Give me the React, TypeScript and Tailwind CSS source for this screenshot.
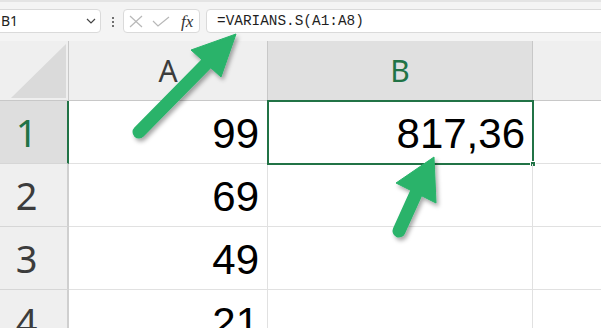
import React from "react";

const GREEN = "#217346";

const rows = [
  { n: "1", a: "99", b: "817,36", selected: true },
  { n: "2", a: "69", b: "" },
  { n: "3", a: "49", b: "" },
  { n: "4", a: "21", b: "" },
];

const Toolbar: React.FC = () => (
  <div className="h-[41px] bg-[#f4f4f4] border-t-2 border-[#e4e4e4] flex items-start pt-[7px] overflow-hidden">
    {/* name box */}
    <div className="ml-[-6px] w-[107px] h-[24px] shrink-0 rounded-[4px] border border-[#dadada] bg-white flex items-center justify-between pl-[6px] pr-[4px]">
      <span className="text-[14px] text-[#222] font-['Noto_Sans',sans-serif] leading-none">B1</span>
      <svg width="10" height="6" viewBox="0 0 10 6" fill="none" stroke="#444" strokeWidth="1.2">
        <polyline points="1,1 5,5 9,1" />
      </svg>
    </div>
    {/* more dots */}
    <div className="ml-[11px] mt-[8px] flex flex-col gap-[2px] shrink-0">
      <span className="w-[2px] h-[2px] bg-[#444] rounded-full" />
      <span className="w-[2px] h-[2px] bg-[#444] rounded-full" />
      <span className="w-[2px] h-[2px] bg-[#444] rounded-full" />
    </div>
    {/* cancel / enter / fx */}
    <div className="ml-[9px] w-[77px] h-[24px] shrink-0 rounded-[4px] border border-[#dadada] bg-white flex items-center pl-[5px]">
      <svg width="14" height="13" viewBox="0 0 14 13" fill="none" stroke="#b8b8b8" strokeWidth="1.2">
        <line x1="1" y1="1" x2="13" y2="12" />
        <line x1="13" y1="1" x2="1" y2="12" />
      </svg>
      <svg className="ml-[9px]" width="18" height="11" viewBox="0 0 18 11" fill="none" stroke="#b8b8b8" strokeWidth="1.2">
        <polyline points="1,5 6,10 17,1" />
      </svg>
      <span className="ml-[11px] text-[17px] italic text-[#333] font-['Liberation_Serif',serif] leading-none">fx</span>
    </div>
    {/* formula */}
    <div className="ml-[6px] h-[24px] flex-1 -mr-[10px] rounded-[4px] border border-[#dadada] bg-white flex items-center pl-[10px]">
      <span className="text-[14.4px] text-[#1f1f1f] font-['Liberation_Mono',monospace] leading-none">
        =VARIANS.S(A1:A8)
      </span>
    </div>
  </div>
);

const Arrows: React.FC = () => (
  <svg className="absolute inset-0 pointer-events-none" width="601" height="328" viewBox="0 0 601 328">
    <defs>
      <filter id="sh" x="-20%" y="-20%" width="150%" height="150%">
        <feDropShadow dx="2" dy="3" stdDeviation="2" floodColor="#000" floodOpacity="0.35" />
      </filter>
    </defs>
    <g filter="url(#sh)" fill="#29b36a" stroke="#29b36a">
      <line x1="139" y1="132" x2="208" y2="62" strokeWidth="13" strokeLinecap="round" />
      <polygon points="236,34 191,50 221,77" strokeWidth="1" strokeLinejoin="round" />
      <line x1="399" y1="231" x2="418" y2="189" strokeWidth="13" strokeLinecap="round" />
      <polygon points="434,157 396,183 436,203" strokeWidth="1" strokeLinejoin="round" />
    </g>
  </svg>
);

export default function App() {
  return (
    <div className="relative w-[601px] h-[328px] overflow-hidden bg-white">
      <Toolbar />
      <div className="grid grid-cols-[69px_199px_265px_68px]">
        {/* header row */}
        <div className="h-[60px] bg-[#efefef] border-r border-b border-[#c8c8c8] flex items-end justify-end overflow-hidden">
          <svg width="56" height="54" viewBox="0 0 56 54" className="mb-[2px] mr-[1px]">
            <polygon points="0,54 55,0 55,54" fill="#dadada" />
          </svg>
        </div>
        <div className="h-[60px] bg-[#efefef] border-r border-b border-[#c8c8c8] flex items-center justify-center text-[30px] text-[#3c3c3c] font-['Noto_Sans',sans-serif]">
          A
        </div>
        <div className="h-[60px] bg-[#e0e0e0] border-r border-b border-[#c8c8c8] flex items-center justify-center text-[30px] font-['Noto_Sans',sans-serif]" style={{ color: GREEN }}>
          B
        </div>
        <div className="h-[60px] bg-[#efefef] border-b border-[#c8c8c8]" />

        {rows.map((r) => (
          <React.Fragment key={r.n}>
            <div
              className={
                r.selected
                  ? "h-[63px] bg-[#dedede] border-r-2 border-r-[#217346] border-b border-b-[#d6d6d6] flex items-center justify-center pr-[14px] text-[38px] text-[#217346] font-['Noto_Sans',sans-serif]"
                  : "h-[63px] bg-[#efefef] border-r-2 border-r-[#cfcfcf] border-b border-b-[#d6d6d6] flex items-center justify-center pr-[14px] text-[38px] text-[#3c3c3c] font-['Noto_Sans',sans-serif]"
              }
            >
              {r.n}
            </div>
            <div className="h-[63px] border-r border-b border-[#e1e1e1] flex items-center justify-end pr-[8px] pt-[2px] text-[42px] text-black font-['Liberation_Sans',Arial,sans-serif]">
              {r.a}
            </div>
            <div className="relative h-[63px] border-r border-b border-[#e1e1e1] flex items-center justify-end pr-[7px] pt-[2px] text-[42px] text-black font-['Liberation_Sans',Arial,sans-serif]">
              {r.b}
              {r.selected && (
                <>
                  <div className="absolute -top-[1px] -left-[1px] -right-[2px] -bottom-[2px] border-2 border-[#217346]" />
                  <div className="absolute -right-[4px] -bottom-[4px] w-[6px] h-[6px] bg-[#217346] border border-white" />
                </>
              )}
            </div>
            <div className="h-[63px] border-b border-[#e1e1e1]" />
          </React.Fragment>
        ))}
      </div>
      <Arrows />
    </div>
  );
}
